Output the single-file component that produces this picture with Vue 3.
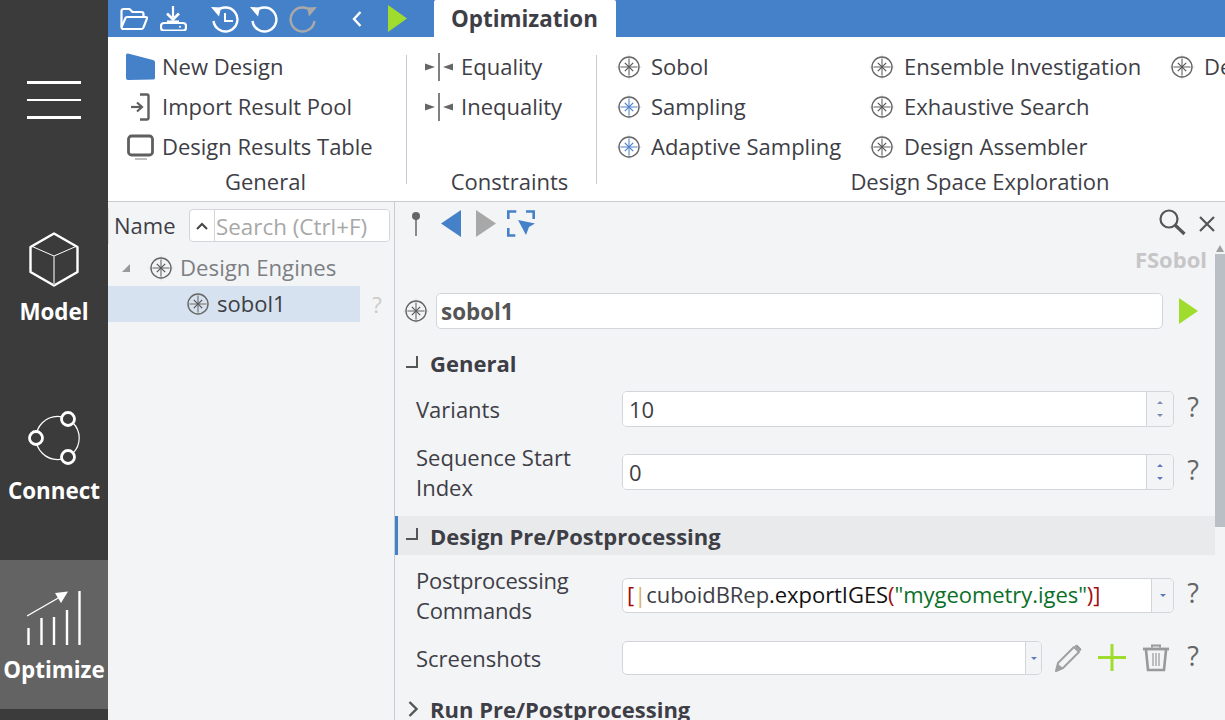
<template>
  <div class="app">
    <svg class="defs" xmlns="http://www.w3.org/2000/svg">
      <symbol id="star" viewBox="0 0 22 22" overflow="visible">
        <path d="M11 -1.500v25M-1.500 11h25" stroke="#d8dadd" stroke-width="1" fill="none" />
        <circle cx="11" cy="11" r="10" fill="none" stroke="#666" stroke-width="1.400" />
        <path d="M11 2.500v17M2.500 11h17" stroke="currentColor" stroke-opacity="0.800" stroke-width="1.100" fill="none" />
        <path d="M6.800 6.800l8.400 8.400M15.200 6.800l-8.400 8.400" stroke="currentColor" stroke-width="1.200" fill="none" />
      </symbol>
      <symbol id="squeeze" viewBox="0 0 28 28">
        <path d="M0 10.500l10 3.500-10 3.500zM28 10.500l-10 3.500 10 3.500z" fill="#666" />
        <path d="M14 0v28" stroke="#808080" stroke-width="2" />
      </symbol>
    </svg>

    <aside class="sidebar">
      <div class="hamburger"><span></span><span></span><span></span></div>
      <div class="nav-item">
        <svg class="nav-icon" viewBox="27 233 54 56" fill="none" stroke="#fff">
          <path d="M54 234.500l23.500 13.500v25L54 286.500 30.500 273v-25z" stroke-width="2.400" stroke-linejoin="round" />
          <path d="M31 247l23 10 23-10" stroke-width="1" />
          <path d="M54 257v29" stroke="#bbb" stroke-width="1.600" />
        </svg>
        <span>Model</span>
      </div>
      <div class="nav-item">
        <svg class="nav-icon" viewBox="27 412 54 56" fill="none" stroke="#fff">
          <circle cx="57.600" cy="439" r="21.600" stroke-width="1.200" />
          <circle cx="68" cy="420" r="6.500" fill="#3b3b3b" stroke-width="2.800" />
          <circle cx="36" cy="439" r="6.500" fill="#3b3b3b" stroke-width="2.800" />
          <circle cx="68" cy="458" r="6.500" fill="#3b3b3b" stroke-width="2.800" />
        </svg>
        <span>Connect</span>
      </div>
      <div class="nav-item active">
        <svg class="nav-icon" viewBox="27 590 54 56" fill="none" stroke="#fff">
          <path d="M28.500 628v17M41.500 618v27M54 617v28M67 610v35M79.500 591v54" stroke-width="2.400" />
          <path d="M27 616l33-19" stroke-width="1.400" />
          <path d="M68 591.500l-13 1.500 6 10z" fill="#fff" stroke="none" />
        </svg>
        <span>Optimize</span>
      </div>
    </aside>

    <div class="main">
      <header class="topbar">
        <svg class="tb folder" viewBox="0 0 28 24" fill="none" stroke="#fff" stroke-width="2.200" stroke-linejoin="round">
          <path d="M1.500 20V4a2 2 0 0 1 2-2h6l3 3h9a2 2 0 0 1 2 2v3" />
          <path d="M1.500 20l4-9a1.500 1.500 0 0 1 1.500-1h19a1 1 0 0 1 1 1.400l-3.500 9a2 2 0 0 1-2 1.600H3.500a2 2 0 0 1-2-2z" />
        </svg>
        <svg class="tb download" viewBox="0 0 27 25" fill="none" stroke="#fff" stroke-width="2.200">
          <path d="M13 0v11" />
          <path d="M7 7.500l6 6 6-6" stroke-width="2.600" />
          <path d="M7 15.500h12" />
          <rect x="1" y="17" width="25" height="7.500" rx="3" />
          <circle cx="20" cy="20.700" r="1" fill="#fff" stroke="none" />
        </svg>
        <svg class="tb history" viewBox="0 0 28 28" fill="none" stroke="#fff" stroke-width="2.400">
          <path d="M5 7a12 12 0 1 1-2.500 9" />
          <path d="M0 2l10 .5-2 9z" fill="#fff" stroke="none" />
          <path d="M14 8v8h8" stroke-width="2" />
        </svg>
        <svg class="tb undo" viewBox="0 0 28 28" fill="none" stroke="#fff" stroke-width="2.400">
          <path d="M5 7a12 12 0 1 1-2.500 9" />
          <path d="M0 2l10 .5-2 9z" fill="#fff" stroke="none" />
        </svg>
        <svg class="tb redo" viewBox="0 0 28 28" fill="none" stroke="#a9a9a9" stroke-width="2.400">
          <path d="M23 7a12 12 0 1 0 2.500 9" />
          <path d="M28 2l-10 .5 2 9z" fill="#a9a9a9" stroke="none" />
        </svg>
        <svg class="tb back" viewBox="0 0 10 16" fill="none" stroke="#fff" stroke-width="2.400">
          <path d="M8.500 1L2 8l6.500 7" />
        </svg>
        <svg class="tb run" viewBox="0 0 19 27"><path d="M0 0l19 13.500L0 27z" fill="#a0dc2d" /></svg>
        <div class="tab">Optimization</div>
      </header>

      <section class="ribbon">
        <div class="group general">
          <div class="item">
            <svg class="ic30" viewBox="0 0 30 28"><path d="M1 2.500Q1 0 3 .5l25 6.500q2 .5 2 2v16q0 1.500-2 1.500l-25 .5q-2 0-2-2z" fill="#4581c8" /></svg>
            <span>New Design</span>
          </div>
          <div class="item">
            <svg class="ic30" viewBox="0 0 30 28" fill="none" stroke="#5f5f5f">
              <path d="M6 14h11" stroke-width="2.200" />
              <path d="M12 9.500l5 4.500-5 4.500" stroke-width="2.200" />
              <path d="M15 1.500h7a1.500 1.500 0 0 1 1.500 1.500v22a1.500 1.500 0 0 1-1.500 1.500h-7" stroke-width="2.400" />
            </svg>
            <span>Import Result Pool</span>
          </div>
          <div class="item">
            <svg class="ic30" viewBox="0 0 30 28" fill="none" stroke="#5f5f5f">
              <rect x="3.500" y="3" width="24" height="19" rx="3" stroke-width="2.800" />
              <path d="M10 26h12" stroke="#aaa" stroke-width="1.500" />
            </svg>
            <span>Design Results Table</span>
          </div>
          <div class="group-label">General</div>
        </div>
        <div class="sep"></div>

        <div class="group constraints">
          <div class="item" v-for="name in constraints" :key="name">
            <svg class="ic28"><use href="#squeeze" /></svg>
            <span>{{ name }}</span>
          </div>
          <div class="item"></div>
          <div class="group-label shifted">Constraints</div>
        </div>
        <div class="sep"></div>

        <div class="group explore">
          <div class="explore-grid">
            <div class="item" v-for="engine in engines" :key="engine.name">
              <svg class="star" :class="{ blue: engine.blue }"><use href="#star" /></svg>
              <span>{{ engine.name }}</span>
            </div>
          </div>
          <div class="group-label">Design Space Exploration</div>
        </div>
      </section>

      <div class="panes">
        <div class="tree-pane">
          <div class="tree-head">
            <span class="name-col">Name</span>
            <div class="search">
              <button class="search-toggle">
                <svg width="12" height="8" viewBox="0 0 12 8" fill="none" stroke="#444" stroke-width="2"><path d="M1 7l5-5 5 5" /></svg>
              </button>
              <input placeholder="Search (Ctrl+F)" />
            </div>
          </div>
          <div class="tree-row root">
            <i class="tree-arrow"></i>
            <svg class="star"><use href="#star" /></svg>
            <span>Design Engines</span>
          </div>
          <div class="tree-line">
            <div class="tree-row child">
              <svg class="star"><use href="#star" /></svg>
              <span>sobol1</span>
            </div>
            <span class="tree-help">?</span>
          </div>
        </div>

        <div class="detail">
          <div class="detail-body">
            <div class="toolbar">
              <svg class="pin" viewBox="0 0 10 28">
                <path d="M5 6v20" stroke="#8a8a8a" stroke-width="2" />
                <circle cx="5" cy="6" r="4" fill="#666" />
              </svg>
              <svg class="nav-tri first" viewBox="0 0 20 27"><path d="M0 13.500L20 0v27z" fill="#4581c8" /></svg>
              <svg class="nav-tri" viewBox="0 0 20 27"><path d="M20 13.500L0 0v27z" fill="#a8a8a8" /></svg>
              <svg class="pick" viewBox="0 0 28 27" fill="none" stroke="#4581c8" stroke-width="2.600">
                <path d="M1.300 9V1.500h8M19 1.500h7.700V9M1.300 18v7.500h7" />
                <path d="M11 10l17 3.500-6 3.500-3 8z" fill="#4581c8" stroke="none" />
              </svg>
              <div class="grow"></div>
              <svg class="lens" viewBox="0 0 28 28" fill="none" stroke="#555">
                <circle cx="11" cy="11" r="8.500" stroke-width="2.200" />
                <path d="M17 17l9.500 9" stroke-width="3.200" />
              </svg>
              <svg class="close" viewBox="0 0 16 16" fill="none" stroke="#555" stroke-width="2.200"><path d="M1 1l14 14M15 1L1 15" /></svg>
            </div>
            <div class="type-name">FSobol</div>

            <div class="name-row">
              <svg class="star"><use href="#star" /></svg>
              <input class="field name-input" value="sobol1" />
              <svg class="name-run" viewBox="0 0 19 26"><path d="M0 0l19 13L0 26z" fill="#a0dc2d" /></svg>
            </div>

            <div class="section">
              <svg class="fold" viewBox="0 0 12 14" fill="none" stroke="#555" stroke-width="2"><path d="M0 12h11V1" /></svg>
              General
            </div>
            <div class="form-row first">
              <label>Variants</label>
              <div class="field spin">
                <input value="10" />
                <div class="spin-btn"><i class="up dim"></i><i class="down dim"></i></div>
              </div>
              <span class="help">?</span>
            </div>
            <div class="form-row second">
              <label>Sequence Start<br />Index</label>
              <div class="field spin">
                <input value="0" />
                <div class="spin-btn"><i class="up"></i><i class="down"></i></div>
              </div>
              <span class="help">?</span>
            </div>

            <div class="section current">
              <svg class="fold" viewBox="0 0 12 14" fill="none" stroke="#555" stroke-width="2"><path d="M0 12h11V1" /></svg>
              Design Pre/Postprocessing
            </div>
            <div class="form-row tight">
              <label class="squeezed">Postprocessing<br />Commands</label>
              <div class="field spin code-field">
                <div class="code"><b class="c-br">[</b><b class="c-bar">|</b><span class="c-id">cuboidBRep</span><span class="c-fn">.exportIGES</span><b class="c-br">(</b><span class="c-str">"mygeometry.iges"</span><b class="c-br">)]</b></div>
                <div class="spin-btn combo"><i class="down"></i></div>
              </div>
              <span class="help">?</span>
            </div>
            <div class="form-row shots">
              <label>Screenshots</label>
              <div class="shot-tools">
                <div class="field spin shot-select">
                  <div class="code"></div>
                  <div class="spin-btn narrow"><i class="down"></i></div>
                </div>
                <svg class="tool" viewBox="0 0 28 28" fill="none">
                  <path d="M2 27l2-8L20 3l5 5L9 24z" stroke="#a0a0a0" stroke-width="2" stroke-linejoin="round" />
                  <path d="M2 27l2-7 5 4z" fill="#a0a0a0" />
                  <path d="M21 2l2-1 4 4-1 2z" fill="#a0a0a0" stroke="#a0a0a0" />
                </svg>
                <svg class="tool" viewBox="0 0 28 28" fill="none" stroke="#a0dc2d" stroke-width="3"><path d="M14 0v27M0 13.500h28" /></svg>
                <svg class="tool" viewBox="0 0 28 28" fill="none" stroke="#999">
                  <path d="M1 5h26" stroke-width="2.800" />
                  <path d="M10 3.500V1.500h8v2" stroke-width="2" />
                  <path d="M4 6l2 20h16l2-20" stroke-width="2.600" />
                  <path d="M11 9v13M14 9v13M17 9v13" stroke-width="1.200" />
                </svg>
              </div>
              <span class="help">?</span>
            </div>

            <div class="section">
              <svg class="fold closed" viewBox="0 0 10 16" fill="none" stroke="#555" stroke-width="2.400"><path d="M1.500 1l7 7-7 7" /></svg>
              Run Pre/Postprocessing
            </div>
          </div>
          <div class="scrollbar">
            <i class="scroll-arrow"></i>
            <div class="scroll-thumb"></div>
          </div>
        </div>
      </div>
    </div>
  </div>
</template>

<script setup>
const constraints = ['Equality', 'Inequality']

const engines = [
  { name: 'Sobol' },
  { name: 'Sampling', blue: true },
  { name: 'Adaptive Sampling', blue: true },
  { name: 'Ensemble Investigation' },
  { name: 'Exhaustive Search' },
  { name: 'Design Assembler' },
  { name: 'Design Study' }
]
</script>

<style>
html,
body {
  margin: 0;
  overflow: hidden;
}
</style>

<style scoped>
.app {
  display: flex;
  width: 1225px;
  height: 720px;
  overflow: hidden;
  font-family: "Open Sans", "Noto Sans", sans-serif;
  font-size: 22px;
  color: #3e3e46;
}

.defs {
  display: none;
}

svg {
  display: block;
  flex: none;
}

/* left navigation */
.sidebar {
  width: 108px;
  flex: none;
  background: #3b3b3b;
  color: #fff;
}

.hamburger {
  height: 202px;
  padding: 81px 27px 0;
  box-sizing: border-box;
}

.hamburger span {
  display: block;
  height: 2.500px;
  margin-bottom: 15px;
  background: #fff;
}

.nav-item {
  display: flex;
  flex-direction: column;
  align-items: center;
  height: 149px;
  margin-bottom: 30px;
  padding-top: 30px;
  box-sizing: border-box;
  font-size: 22.400px;
  font-weight: 700;
  line-height: 30px;
}

.nav-item.active {
  background: #636363;
}

.nav-icon {
  width: 54px;
  height: 56px;
  margin-bottom: 9px;
}

/* title bar */
.main {
  flex: 1;
  min-width: 0;
  display: flex;
  flex-direction: column;
}

.topbar {
  display: flex;
  align-items: center;
  height: 37px;
  flex: none;
  background: #4581c8;
}

.folder { width: 28px; height: 24px; margin-left: 12px; }
.download { width: 27px; height: 25px; margin-left: 12px; }
.history { width: 28px; height: 28px; margin-left: 24px; }
.undo { width: 28px; height: 28px; margin-left: 11px; }
.redo { width: 28px; height: 28px; margin-left: 11px; }
.back { width: 10px; height: 16px; margin-left: 35px; }
.run { width: 19px; height: 27px; margin-left: 26px; }

.tab {
  align-self: stretch;
  width: 182px;
  margin-left: 27px;
  padding-left: 17px;
  box-sizing: border-box;
  background: #fff;
  border-radius: 2px 2px 0 0;
  font-size: 22.400px;
  font-weight: 700;
  line-height: 37px;
}

/* ribbon */
.ribbon {
  display: flex;
  height: 165px;
  flex: none;
  box-sizing: border-box;
  background: #fff;
  border-bottom: 1px solid #c9cbce;
  overflow: hidden;
}

.group {
  display: flex;
  flex-direction: column;
  flex: none;
  padding-top: 10px;
  box-sizing: border-box;
}

.general { width: 298px; padding-left: 17px; }
.constraints { width: 189px; padding-left: 18px; }
.explore { width: 745px; padding-left: 21px; }

.sep {
  width: 1px;
  height: 129px;
  margin-top: 18px;
  flex: none;
  background: #c8ccd4;
}

.item {
  display: flex;
  align-items: center;
  height: 40px;
  flex: none;
  white-space: nowrap;
}

.item span {
  margin-top: -2px;
}

.ic30 { width: 30px; height: 28px; margin-right: 7px; }
.ic28 { width: 28px; height: 28px; margin-right: 8px; }
.item .star { margin-right: 11px; }

.star {
  width: 22px;
  height: 22px;
  overflow: visible;
  color: #555;
}

.star.blue {
  color: #4581c8;
}

.explore-grid {
  display: grid;
  grid-template-columns: 253px 300px 171px;
  grid-template-rows: repeat(3, 40px);
  grid-auto-flow: column;
}

.group-label {
  flex: none;
  margin-top: -1px;
  line-height: 30px;
  text-align: center;
}

.group-label.shifted {
  margin-left: -2px;
}

/* tree */
.panes {
  flex: 1;
  display: flex;
  min-height: 0;
  background: #f3f4f6;
}

.tree-pane {
  width: 287px;
  flex: none;
  box-sizing: border-box;
  border-right: 1px solid #c9cbce;
}

.tree-head {
  display: flex;
  align-items: center;
  height: 48px;
  box-sizing: border-box;
}

.name-col {
  width: 81px;
  padding-left: 5px;
  height: 36px;
  line-height: 34px;
  box-sizing: border-box;
  border-left: 1px solid #dcdee2;
}

.search {
  display: flex;
  width: 201px;
  height: 33px;
  box-sizing: border-box;
  background: #fff;
  border: 1px solid #d3d5da;
  border-radius: 4px;
  margin-top: -1px;
  overflow: hidden;
}

.search-toggle {
  display: flex;
  align-items: center;
  justify-content: center;
  width: 25px;
  flex: none;
  padding: 0;
  background: none;
  border: 0;
  border-right: 1px solid #d3d5da;
}

.search input {
  flex: 1;
  min-width: 0;
  padding: 2px 0 0 1px;
  border: 0;
  outline: 0;
  font: inherit;
  font-size: 22.400px;
}

.search input::placeholder {
  color: #a8a8a8;
  opacity: 1;
}

.tree-row {
  display: flex;
  align-items: center;
  height: 36px;
  box-sizing: border-box;
  white-space: nowrap;
}

.tree-row span {
  margin-top: -2px;
}

.tree-row .star {
  margin-right: 8px;
}

.root {
  padding-left: 14px;
  color: #7d7f84;
  font-size: 22.200px;
}

.tree-arrow {
  width: 0;
  height: 0;
  margin-right: 20px;
  border-style: solid;
  border-width: 0 0 8px 8px;
  border-color: transparent transparent #999 transparent;
}

.tree-line {
  display: flex;
  align-items: center;
}

.child {
  width: 252px;
  padding-left: 79px;
  background: #d6e2ef;
}

.tree-help {
  width: 34px;
  text-align: center;
  color: #cbcbcb;
}

/* detail panel */
.detail {
  flex: 1;
  min-width: 0;
  display: flex;
}

.detail-body {
  flex: 1;
  min-width: 0;
  overflow: hidden;
}

.toolbar {
  display: flex;
  align-items: center;
  height: 43px;
  padding-left: 16px;
}

.pin { width: 10px; height: 28px; }
.nav-tri { width: 20px; height: 27px; margin-left: 15px; }
.nav-tri.first { margin-left: 20px; }
.pick { width: 28px; height: 27px; margin-left: 11px; }
.grow { flex: 1; }
.lens { width: 28px; height: 28px; margin-top: -4px; }
.close { width: 16px; height: 16px; margin-left: 13px; }

.type-name {
  height: 30px;
  line-height: 28px;
  padding-right: 8px;
  text-align: right;
  font-weight: 700;
  color: #c6c6c8;
}

.name-row {
  display: flex;
  align-items: center;
  margin: 18px 0 15px 10px;
}

.field {
  height: 36px;
  box-sizing: border-box;
  background: #fff;
  border: 1px solid #d3d5da;
  border-radius: 5px;
}

.name-input {
  width: 727px;
  margin-left: 9px;
  padding: 0 4px;
  outline: 0;
  font: inherit;
  font-size: 22.400px;
  font-weight: 700;
  color: #555;
}

.name-run {
  width: 19px;
  height: 26px;
  margin-left: 16px;
}

.section {
  display: flex;
  align-items: center;
  height: 39px;
  padding-left: 11px;
  padding-bottom: 1px;
  box-sizing: border-box;
  font-weight: 700;
  white-space: nowrap;
}

.section.current {
  padding-left: 8px;
  padding-bottom: 0;
  border-left: 3px solid #4581c8;
  background: #e9eaec;
}

.fold {
  width: 12px;
  height: 14px;
  margin-top: -3px;
  margin-right: 12px;
}

.fold.closed {
  width: 10px;
  height: 16px;
  margin-top: 0;
  margin-left: 2px;
  margin-right: 12px;
}

.form-row {
  display: grid;
  grid-template-columns: 206px 552px 38px;
  align-items: center;
  padding-left: 21px;
  line-height: 30px;
}

.form-row.first {
  margin-top: 8px;
  margin-bottom: 15px;
}

.form-row.second {
  margin-bottom: 14px;
}

.form-row.tight {
  margin-top: 10px;
  margin-bottom: 16px;
}

.form-row.shots {
  margin-bottom: 15px;
}

.squeezed {
  letter-spacing: -0.200px;
}

.form-row .field {
  display: flex;
  overflow: hidden;
}

.spin input {
  flex: 1;
  min-width: 0;
  padding: 0 6px;
  border: 0;
  outline: 0;
  font: inherit;
  color: #3e3e46;
}

.code-field {
  height: 35px;
}

.spin-btn {
  display: flex;
  flex-direction: column;
  align-items: center;
  justify-content: center;
  gap: 10px;
  width: 27px;
  flex: none;
  box-sizing: border-box;
  background: #f3f4f6;
  border-left: 1px solid #d3d5da;
}

.spin-btn.combo {
  width: 22px;
}

.spin-btn.narrow {
  width: 16px;
}

.spin-btn i {
  width: 0;
  height: 0;
  border-left: 3px solid transparent;
  border-right: 3px solid transparent;
}

.spin-btn .up { border-bottom: 3px solid #5d78bd; }
.spin-btn .down { border-top: 3px solid #5d78bd; }
.spin-btn .up.dim { border-bottom-color: #7f8bb0; }
.spin-btn .down.dim { border-top-color: #7f8bb0; }

.code {
  flex: 1;
  min-width: 0;
  padding-left: 4px;
  line-height: 31px;
  white-space: nowrap;
  overflow: hidden;
  letter-spacing: -0.050px;
}

.code b { font-weight: 400; }
.c-br { color: #a01010; }
.c-bar { color: #d8b468; }
.c-id { color: #3e3e46; }
.c-fn { color: #111; }
.c-str { color: #0a7028; }

.help {
  margin-top: -4px;
  text-align: center;
  font-size: 27px;
  color: #666;
}

.shot-tools {
  display: flex;
  align-items: center;
}

.shot-select {
  width: 420px;
  flex: none;
  height: 34px;
}

.tool {
  width: 28px;
  height: 28px;
  margin-left: 16px;
}

.shot-select + .tool {
  margin-left: 12px;
}

/* scrollbar */
.scrollbar {
  width: 10px;
  flex: none;
  padding-top: 43px;
}

.scroll-arrow {
  display: block;
  width: 0;
  height: 0;
  margin-left: 1px;
  margin-bottom: 2px;
  border-left: 4px solid transparent;
  border-right: 4px solid transparent;
  border-bottom: 7px solid #a0a0a0;
}

.scroll-thumb {
  height: 273px;
  background: #babec5;
}
</style>
